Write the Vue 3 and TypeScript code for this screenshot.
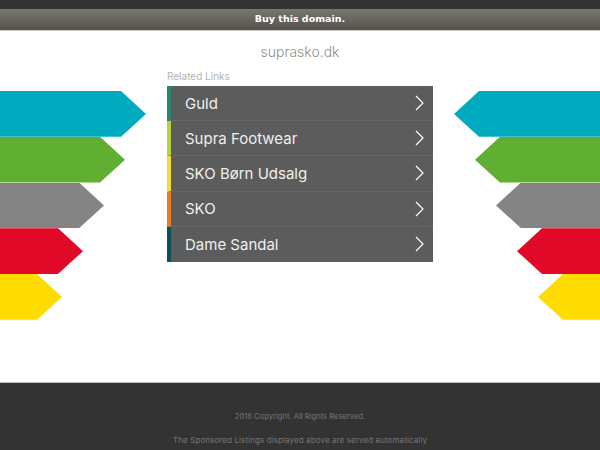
<script setup lang="ts">
// parked domain landing page: arrows on both sides, link list in the middle
interface Arrow {
  color: string
  width: number
}

interface RelatedLink {
  label: string
  accent: string
}

const arrows: Arrow[] = [
  { color: '#00abc0', width: 146 },
  { color: '#60ae32', width: 125 },
  { color: '#848484', width: 104 },
  { color: '#e00a28', width: 83 },
  { color: '#ffdc00', width: 62 },
]

const links: RelatedLink[] = [
  { label: 'Guld', accent: '#278a70' },
  { label: 'Supra Footwear', accent: '#b5d43c' },
  { label: 'SKO Børn Udsalg', accent: '#f6dc32' },
  { label: 'SKO', accent: '#e87d1e' },
  { label: 'Dame Sandal', accent: '#0f4c5c' },
]
</script>

<template>
  <div class="page">
    <div class="topbar"></div>
    <a class="buy">Buy this domain.</a>

    <h1 class="domain">suprasko.dk</h1>

    <main class="content">
      <div class="arrows">
        <div
          v-for="arrow in arrows"
          :key="arrow.color"
          class="arrow"
          :style="{ background: arrow.color, width: arrow.width + 'px' }"
        ></div>
      </div>

      <section class="related">
        <h2>Related Links</h2>
        <ul>
          <li v-for="link in links" :key="link.label" :style="{ borderLeftColor: link.accent }">
            <span>{{ link.label }}</span>
            <svg width="9" height="16" viewBox="0 0 9 16" fill="none">
              <path d="M1 1l7 7-7 7" stroke="#fff" stroke-width="1.2" />
            </svg>
          </li>
        </ul>
      </section>

      <div class="arrows flipped">
        <div
          v-for="arrow in arrows"
          :key="arrow.color"
          class="arrow"
          :style="{ background: arrow.color, width: arrow.width + 'px' }"
        ></div>
      </div>
    </main>

    <footer class="footer">
      <p class="copyright">2018 Copyright. All Rights Reserved.</p>
      <p>
        The Sponsored Listings displayed above are served automatically by a third party. Neither
        the service provider nor the domain owner maintain any relationship with the advertisers.
      </p>
    </footer>
  </div>
</template>

<style>
html,
body {
  margin: 0;
  height: 450px;
  overflow: hidden;
  background: #fff;
}
</style>

<style scoped>
.page {
  font-family: Inter, 'Open Sans', sans-serif;
  width: 600px;
}
.topbar {
  height: 9px;
  background: #333;
}
.buy {
  display: block;
  height: 21px;
  text-align: center;
  font: bold 9.5px/20px 'DejaVu Sans', sans-serif;
  color: #fff;
  background: linear-gradient(#7b7670, #54514d);
  border-bottom: 1px solid #c9c5bf;
}
.domain {
  margin: 0;
  padding-top: 12px;
  height: 24px;
  line-height: 17px;
  font-size: 14px;
  font-weight: 300;
  text-align: center;
  color: #8f8f8f;
}
.content {
  display: grid;
  grid-template-columns: 1fr 266px 1fr;
  column-gap: 21px;
  height: 315px;
  padding-top: 1px;
  box-sizing: border-box;
}
.arrows {
  display: flex;
  flex-direction: column;
  padding-top: 23px;
}
.arrow {
  height: 45.75px;
  clip-path: polygon(0 0, calc(100% - 25px) 0, 100% 50%, calc(100% - 25px) 100%, 0 100%);
}
.flipped {
  align-items: flex-end;
}
.flipped .arrow {
  transform: scaleX(-1);
}
.related h2 {
  margin: 0;
  height: 18px;
  line-height: 16px;
  font-size: 10px;
  font-weight: 400;
  color: #b4b4b4;
}
.related ul {
  list-style: none;
  margin: 0;
  padding: 0;
  background: #5c5c5c;
}
.related li {
  display: flex;
  align-items: center;
  justify-content: space-between;
  height: 35.2px;
  box-sizing: border-box;
  padding: 0 9px 0 14px;
  border-left: 4px solid;
  border-bottom: 1px solid #666;
  font-size: 15px;
  color: #efefef;
}
.related li:last-child {
  border-bottom: 0;
}
.footer {
  height: 68px;
  overflow: hidden;
  box-sizing: border-box;
  padding: 27px 172px 0;
  background: #333;
  border-top: 1px solid #bdbdbd;
  text-align: center;
  font-size: 8px;
  letter-spacing: 0.1px;
  line-height: 14px;
  color: #757575;
}
.footer p {
  margin: 0 0 9px;
}
.copyright {
  font-size: 7.6px;
  letter-spacing: 0;
}
</style>
